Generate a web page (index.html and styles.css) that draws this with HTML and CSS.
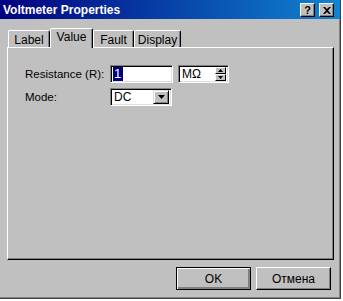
FILE: index.html
```html
<!DOCTYPE html>
<html lang="en">
<head>
  <meta charset="UTF-8">
  <title>Voltmeter Properties</title>
  <link rel="stylesheet" href="styles.css">
</head>
<body>
  <div class="window">
    <div class="titlebar">
      <span class="title">Voltmeter Properties</span>
      <div class="caption-buttons">
        <span class="cap-btn">?</span>
        <span class="cap-btn close">
          <svg width="8" height="7" viewBox="0 0 8 7"><path d="M0 0h2l2 2 2-2h2L5 3.5 8 7H6L4 5 2 7H0l3-3.5z" fill="#000"/></svg>
        </span>
      </div>
    </div>

    <div class="tabs">
      <div class="tab tab-label">Label</div>
      <div class="tab tab-value active">Value</div>
      <div class="tab tab-fault">Fault</div>
      <div class="tab tab-display">Display</div>
    </div>

    <div class="panel">
      <div class="form">
        <label class="field-label">Resistance (R):</label>
        <div class="controls">
          <div class="textbox value-box"><span class="selected">1</span></div>
          <div class="textbox unit-box">
            <span class="unit">M&Omega;</span>
            <div class="spinner">
              <span class="spin up"><svg width="5" height="3" viewBox="0 0 5 3"><path d="M2.5 0L5 3H0z" fill="#000"/></svg></span>
              <span class="spin down"><svg width="5" height="3" viewBox="0 0 5 3"><path d="M0 0h5L2.5 3z" fill="#000"/></svg></span>
            </div>
          </div>
        </div>

        <label class="field-label">Mode:</label>
        <div class="controls">
          <div class="textbox combo">
            <span class="combo-text">DC</span>
            <span class="drop-btn"><svg width="7" height="4" viewBox="0 0 7 4"><path d="M0 0h7L3.5 4z" fill="#000"/></svg></span>
          </div>
        </div>
      </div>
    </div>

    <div class="actions">
      <button class="btn default">OK</button>
      <button class="btn">Отмена</button>
    </div>
  </div>
</body>
</html>
```

FILE: styles.css
```css
body {
  margin: 0;
  background-color: #ffffff;
  font-family: "Liberation Sans", Arial, sans-serif;
  font-size: 11px;
  color: #000;
}
.window {
  width: 340px;
  height: 298px;
  background-color: #c0c0c0;
  border-right: 1px solid #404040;
  border-bottom: 1px solid #404040;
  box-shadow: inset -1px -1px #808080;
  display: flex;
  flex-direction: column;
}
.titlebar {
  height: 19px;
  display: flex;
  align-items: center;
  justify-content: space-between;
  padding-left: 3px;
  padding-right: 6px;
  background: linear-gradient(to right, #000080, #1084d0);
}
.title {
  color: #fff;
  font-weight: bold;
  font-size: 12px;
}
.caption-buttons {
  display: flex;
  gap: 4px;
  padding-top: 1px;
}
.cap-btn {
  width: 13px;
  height: 12px;
  display: flex;
  align-items: center;
  justify-content: center;
  background-color: #c0c0c0;
  border-top: 1px solid #fff;
  border-left: 1px solid #fff;
  border-right: 1px solid #000;
  border-bottom: 1px solid #000;
  box-shadow: inset -1px -1px #808080;
  font-weight: bold;
  font-size: 11px;
  line-height: 1;
}

/* tab strip */
.tabs {
  display: flex;
  align-items: flex-end;
  margin-top: 9px;
  margin-left: 8px;
  height: 19px;
  position: relative;
  z-index: 1;
}
.tab {
  height: 17px;
  box-sizing: border-box;
  border-top: 1px solid #fff;
  border-left: 1px solid #fff;
  border-right: 1px solid #000;
  box-shadow: inset -1px 0 #808080;
  border-radius: 2px 2px 0 0;
  display: flex;
  align-items: center;
  justify-content: center;
  padding-top: 2px;
  font-size: 12px;
  background-color: #c0c0c0;
}
.tab-label { width: 42px; }
.tab-value { width: 43px; }
.tab-fault { width: 41px; }
.tab-display { width: 47px; }
.tab.active {
  height: 20px;
  margin-bottom: -1px;
  padding-top: 0;
  padding-bottom: 3px;
}

.panel {
  margin-left: 7px;
  width: 327px;
  height: 213px;
  box-sizing: border-box;
  border-top: 1px solid #fff;
  border-left: 1px solid #fff;
  border-right: 1px solid #000;
  border-bottom: 1px solid #000;
  box-shadow: inset -1px -1px #808080;
  padding: 17px 0 0 17px;
}
.form {
  display: grid;
  grid-template-columns: 85px auto;
  row-gap: 5px;
  align-items: center;
}
.field-label {
  font-size: 11.5px;
}
.controls {
  display: flex;
  gap: 5px;
}
.textbox {
  height: 18px;
  box-sizing: border-box;
  background-color: #fff;
  border-top: 1px solid #808080;
  border-left: 1px solid #808080;
  border-right: 1px solid #fff;
  border-bottom: 1px solid #fff;
  box-shadow: inset 1px 1px #000, inset -1px -1px #dfdfdf;
  display: flex;
  align-items: center;
}
.value-box {
  width: 63px;
  padding-left: 2px;
}
.selected {
  background-color: #000080;
  color: #fff;
  font-size: 13px;
  line-height: 14px;
  padding: 0 2px 0 1px;
}
.unit-box {
  width: 51px;
  padding-left: 3px;
  justify-content: space-between;
  padding-right: 2px;
}
.unit {
  font-size: 12px;
}
.spinner {
  display: flex;
  flex-direction: column;
}
.spin {
  width: 11px;
  height: 7px;
  box-sizing: border-box;
  background-color: #c0c0c0;
  border-top: 1px solid #fff;
  border-left: 1px solid #fff;
  border-right: 1px solid #000;
  border-bottom: 1px solid #000;
  display: flex;
  align-items: center;
  justify-content: center;
}
.combo {
  width: 62px;
  padding-left: 3px;
  padding-right: 2px;
  justify-content: space-between;
}
.combo-text {
  font-size: 12px;
}
.drop-btn {
  width: 16px;
  height: 14px;
  box-sizing: border-box;
  background-color: #c0c0c0;
  border-top: 1px solid #dfdfdf;
  border-left: 1px solid #dfdfdf;
  border-right: 1px solid #000;
  border-bottom: 1px solid #000;
  box-shadow: inset 1px 1px #fff, inset -1px -1px #808080;
  display: flex;
  align-items: center;
  justify-content: center;
}

.actions {
  display: flex;
  justify-content: flex-end;
  gap: 5px;
  margin-top: 7px;
  padding-right: 9px;
}
.btn {
  width: 75px;
  height: 23px;
  box-sizing: border-box;
  background-color: #c0c0c0;
  font-family: "Liberation Sans", Arial, sans-serif;
  font-size: 12px;
  color: #000;
  border-top: 1px solid #fff;
  border-left: 1px solid #fff;
  border-right: 1px solid #000;
  border-bottom: 1px solid #000;
  box-shadow: inset -1px -1px #808080;
  padding: 0;
}
.btn.default {
  border: 1px solid #000;
  box-shadow: inset 1px 1px #fff, inset -2px -2px #808080, inset -1px -1px #000;
}
```
